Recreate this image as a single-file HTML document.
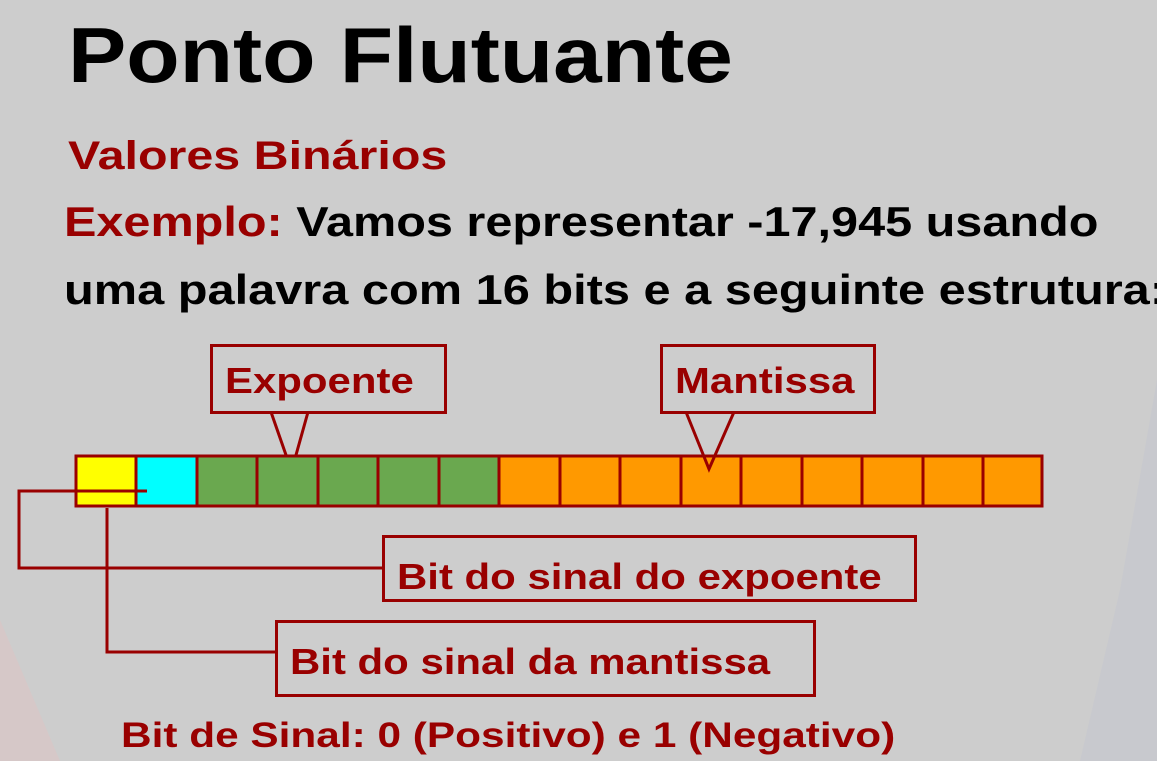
<!DOCTYPE html>
<html><head><meta charset="utf-8"><style>
body{margin:0;width:1157px;height:761px;overflow:hidden;background:#cdcdcd;font-family:"Liberation Sans",sans-serif;font-weight:bold;position:relative}
.t{position:absolute;white-space:nowrap;transform-origin:0 0}
.box{position:absolute;border:3px solid #990000;box-sizing:border-box;color:#990000;font-size:36px;padding-left:12px;white-space:nowrap}
.box span{display:inline-block;transform:scaleX(1.165);transform-origin:0 0}
</style></head><body>
<svg width="1157" height="761" style="position:absolute;left:0;top:0">
<polygon points="1157,380 1157,761 1080,761 1120,590" fill="#c4c6ce" opacity="0.6"/>
<polygon points="0,620 0,761 60,761" fill="#d6c8c8"/>
</svg>
<div class="t" style="left:68px;top:10px;font-size:78px;color:#000;transform:scaleX(1.12)">Ponto Flutuante</div>
<div class="t" style="left:68px;top:134px;font-size:40px;color:#990000;transform:scaleX(1.21)">Valores Binários</div>
<div class="t" style="left:64px;top:198px;font-size:42px;color:#000;transform:scaleX(1.157)"><span style="color:#990000">Exemplo:</span> Vamos representar -17,945 usando</div>
<div class="t" style="left:64px;top:266px;font-size:42px;color:#000;transform:scaleX(1.16)">uma palavra com 16 bits e a seguinte estrutura:</div>
<svg width="1157" height="761" style="position:absolute;left:0;top:0">
<g stroke="#990000" stroke-width="3">
<rect x="76" y="456" width="60" height="50" fill="#ffff00"/>
<rect x="136" y="456" width="61" height="50" fill="#00ffff"/>
<rect x="197" y="456" width="60" height="50" fill="#6aa84f"/>
<rect x="257" y="456" width="61" height="50" fill="#6aa84f"/>
<rect x="318" y="456" width="60" height="50" fill="#6aa84f"/>
<rect x="378" y="456" width="61" height="50" fill="#6aa84f"/>
<rect x="439" y="456" width="60" height="50" fill="#6aa84f"/>
<rect x="499" y="456" width="61" height="50" fill="#ff9900"/>
<rect x="560" y="456" width="60" height="50" fill="#ff9900"/>
<rect x="620" y="456" width="61" height="50" fill="#ff9900"/>
<rect x="681" y="456" width="60" height="50" fill="#ff9900"/>
<rect x="741" y="456" width="61" height="50" fill="#ff9900"/>
<rect x="802" y="456" width="60" height="50" fill="#ff9900"/>
<rect x="862" y="456" width="61" height="50" fill="#ff9900"/>
<rect x="923" y="456" width="60" height="50" fill="#ff9900"/>
<rect x="983" y="456" width="59" height="50" fill="#ff9900"/>
<polyline points="147,491 19,491 19,568 384,568" fill="none"/>
<polyline points="107,508 107,652 277,652" fill="none"/>
<polyline points="271,412 286,455" fill="none"/>
<polyline points="308,412 296,455" fill="none"/>
<polyline points="686,412 709,469 734,412" fill="none"/>
</g>
</svg>
<div class="box" style="left:210px;top:344px;width:237px;height:70px;line-height:68px"><span>Expoente</span></div>
<div class="box" style="left:660px;top:344px;width:216px;height:70px;line-height:68px"><span>Mantissa</span></div>
<div class="box" style="left:382px;top:535px;width:535px;height:67px;line-height:78px"><span>Bit do sinal do expoente</span></div>
<div class="box" style="left:275px;top:620px;width:541px;height:77px;line-height:78px"><span>Bit do sinal da mantissa</span></div>
<div class="t" style="left:121px;top:716px;font-size:35px;color:#990000;transform:scaleX(1.21)">Bit de Sinal: 0 (Positivo) e 1 (Negativo)</div>
</body></html>
